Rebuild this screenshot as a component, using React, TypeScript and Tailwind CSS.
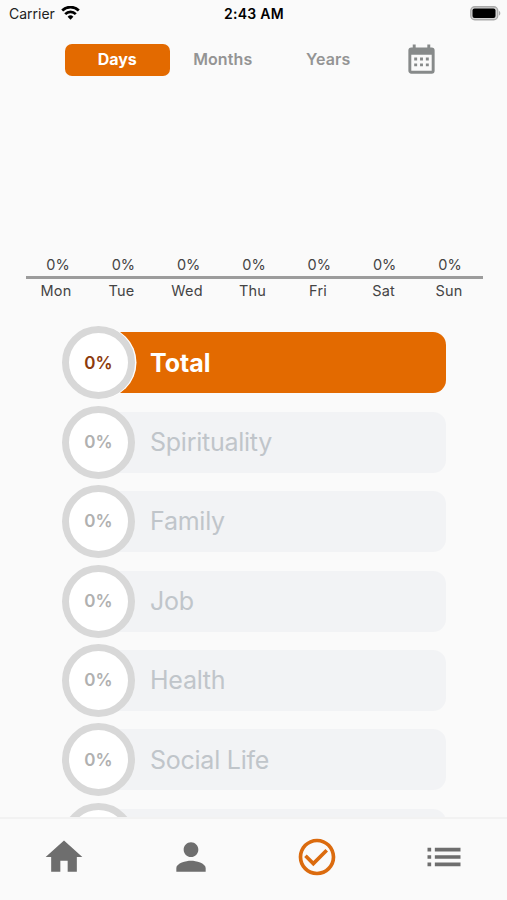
import React, { useState } from 'react';

const TABS = ['Days', 'Months', 'Years'];

const DAYS = [
  { name: 'Mon', value: 0 },
  { name: 'Tue', value: 0 },
  { name: 'Wed', value: 0 },
  { name: 'Thu', value: 0 },
  { name: 'Fri', value: 0 },
  { name: 'Sat', value: 0 },
  { name: 'Sun', value: 0 },
];

const CATEGORIES = ['Total', 'Spirituality', 'Family', 'Job', 'Health', 'Social Life'];

const NAV_ICONS = [
  { label: 'Home', path: 'M10 20v-6h4v6h5v-8h3L12 3 2 12h3v8z' },
  { label: 'Profile', path: 'M12 12c2.21 0 4-1.79 4-4s-1.79-4-4-4-4 1.79-4 4 1.79 4 4 4zm0 2c-2.67 0-8 1.34-8 4v2h16v-2c0-2.66-5.33-4-8-4z' },
  { label: 'Goals', path: 'M16.59 7.58L10 14.17l-3.59-3.58L5 12l5 5 8-8zM12 2C6.48 2 2 6.48 2 12s4.48 10 10 10 10-4.48 10-10S17.52 2 12 2zm0 18c-4.42 0-8-3.58-8-8s3.58-8 8-8 8 3.58 8 8-3.58 8-8 8z' },
  { label: 'List', path: 'M3 13h2v-2H3v2zm0 4h2v-2H3v2zm0-8h2V7H3v2zm4 4h14v-2H7v2zm0 4h14v-2H7v2zM7 7v2h14V7H7z' },
];

const StatusBar = () => (
  <div className="grid h-[27px] shrink-0 grid-cols-3 items-center pl-[8px] pr-[7px] text-[14px] text-[#222]">
    <div className="flex items-center gap-[6px] pl-px">
      <span>Carrier</span>
      <svg className="-mt-[2px]" width="19" height="14" viewBox="0 0 19 14" fill="none" stroke="#000" strokeWidth="2.7">
        <path d="M1.2 4.5a11.8 11.8 0 0 1 16.6 0" />
        <path d="M4.2 8.1a7.5 7.5 0 0 1 10.6 0" />
        <path d="M9.5 13.8L6.6 10.8a4.1 4.1 0 0 1 5.8 0z" fill="#000" stroke="none" />
      </svg>
    </div>
    <span className="text-center font-semibold tracking-[0.3px] text-black">2:43 AM</span>
    <svg className="-mr-px justify-self-end" width="31" height="15" viewBox="0 0 31 15">
      <rect x="0.75" y="0.75" width="27" height="13" rx="4" fill="#d4d4d4" stroke="#aaa" strokeWidth="1.3" />
      <rect x="2.5" y="2.5" width="23" height="9.5" rx="2" fill="#000" />
      <path d="M29 5v4.6c1.8-.7 1.8-3.9 0-4.6z" fill="#aaa" />
    </svg>
  </div>
);

const CategoryRow = ({ name, active }: { name: string; active: boolean }) => (
  <div className="flex h-[73px] shrink-0 items-center">
    <div
      className={`z-10 flex size-[73px] shrink-0 items-center justify-center rounded-full border-[7px] border-[#d8d8d8] bg-white pt-px text-[17px] font-semibold tracking-[0.2px] ${
        active ? 'text-[#8c3a0c] shadow-[1.5px_0_0_#fff]' : 'text-[#b0b0b0]'
      }`}
    >
      0%
    </div>
    <div
      className={`-ml-[36px] flex h-[61px] flex-1 items-center rounded-r-[13px] pl-[51px] pt-px text-[25px] ${
        active ? 'bg-[#e36a00] font-bold text-white' : 'bg-[#f2f3f5] tracking-[-0.25px] text-[#c0c5ca]'
      }`}
    >
      {name}
    </div>
  </div>
);

const App = () => {
  const [tab, setTab] = useState('Days');
  const [category, setCategory] = useState('Total');

  return (
    <div className="flex h-[900px] w-[507px] flex-col overflow-hidden bg-[#fafafa] font-['Inter',sans-serif]">
      <StatusBar />

      <div className="mt-[16.5px] flex h-8 shrink-0 items-center pl-[64.5px]">
        {TABS.map((t) => (
          <button
            key={t}
            onClick={() => setTab(t)}
            className={`h-8 w-[105.5px] rounded-[7px] pb-[2px] text-[16px] ${
              t === tab ? 'bg-[#e36a00] font-bold text-white' : 'font-semibold tracking-[0.1px] text-[#949494]'
            }`}
          >
            {t}
          </button>
        ))}
        <svg className="ml-[23px] mt-[2px]" width="35" height="35" viewBox="0 0 24 24" fill="#878a8a">
          <path d="M9 10v2H7v-2h2m4 0v2h-2v-2h2m4 0v2h-2v-2h2m2-7a2 2 0 0 1 2 2v14a2 2 0 0 1-2 2H5c-1.11 0-2-.9-2-2V5a2 2 0 0 1 2-2h1V1h2v2h8V1h2v2h1m0 16V8H5v11h14M9 14v2H7v-2h2m4 0v2h-2v-2h2m4 0v2h-2v-2h2z" />
        </svg>
      </div>

      {/* Weekly chart */}
      <div className="ml-[26px] mr-[24px] mt-[179.5px] shrink-0 text-[14.5px] leading-5 text-[#444]">
        <div className="flex justify-between border-b-[3px] border-[#9c9c9c] pb-px pl-[16px] pr-[17px]">
          {DAYS.map((d) => (
            <span key={d.name} className="w-8 text-center">{d.value}%</span>
          ))}
        </div>
        <div className="flex justify-between pl-[14px] pr-[18px] pt-[2px] tracking-[0.15px]">
          {DAYS.map((d) => (
            <span key={d.name} className="w-8 text-center">
              {d.name}
            </span>
          ))}
        </div>
      </div>

      <div className="mt-[25.4px] flex min-h-0 flex-1 flex-col gap-[6.4px] overflow-hidden pl-[62px] pr-[61px]">
        {CATEGORIES.map((c) => (
          <div key={c} onClick={() => setCategory(c)}>
            <CategoryRow name={c} active={c === category} />
          </div>
        ))}
        {/* next row, peeking out above the nav */}
        <CategoryRowPeek />
      </div>

      <nav className="grid h-[83px] shrink-0 grid-cols-4 justify-items-center border-t-2 border-[#f2f2f2] pl-px pt-[16px]">
        {NAV_ICONS.map((icon) => (
          <button key={icon.label} aria-label={icon.label} className="h-11">
            <svg width="44" height="44" viewBox="0 0 24 24" fill={icon.label === 'Goals' ? '#db6b0e' : '#6e6e6e'}>
              <path d={icon.path} />
            </svg>
          </button>
        ))}
      </nav>
    </div>
  );
};

const CategoryRowPeek = () => (
  <div className="flex h-[73px] shrink-0 items-center">
    <div className="z-10 size-[73px] shrink-0 rounded-full border-[7px] border-[#d8d8d8] bg-white" />
    <div className="-ml-[36px] h-[61px] flex-1 rounded-r-[13px] bg-[#f2f3f5]" />
  </div>
);

export default App;
